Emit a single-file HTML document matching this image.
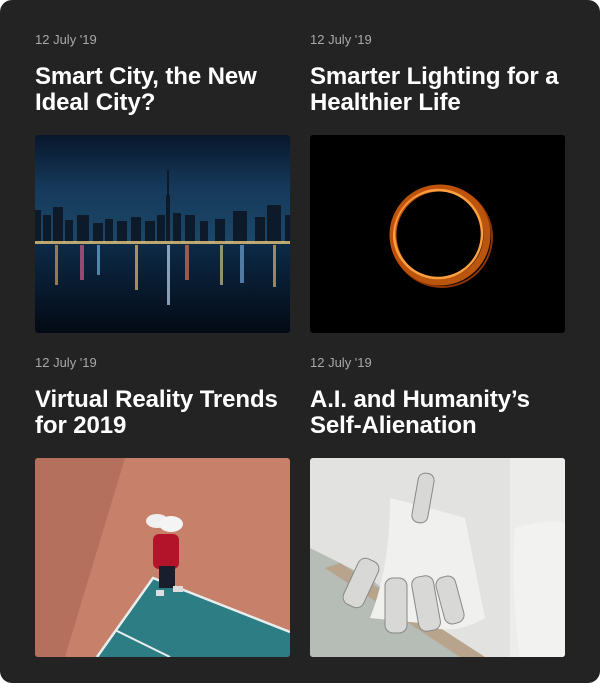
<!DOCTYPE html>
<html><head><meta charset="utf-8"><style>
html,body{margin:0;padding:0;background:#fff;width:600px;height:683px;overflow:hidden}
.wrap{position:absolute;left:0;top:0;width:600px;height:683px;background:#232323;border-radius:12px}
.card{position:absolute;width:255px}
.date{position:absolute;top:0;left:0;font:13px "Liberation Sans",sans-serif;color:#a8a8a8;white-space:nowrap}
.title{position:absolute;top:32px;left:0;font:bold 24px/26px "Liberation Sans",sans-serif;color:#fff;white-space:nowrap;letter-spacing:-0.1px}
.img{position:absolute;left:0;width:255px;border-radius:3px;overflow:hidden}
svg{display:block}
</style></head><body><div class="wrap">

<div class="card" style="left:35px;top:32px">
<div class="date">12 July '19</div>
<div class="title">Smart City, the New<br>Ideal City?</div>
<div class="img" style="top:103px;height:198px">
<svg width="255" height="198">
<defs><linearGradient id="sky" x1="0" y1="0" x2="0" y2="1"><stop offset="0" stop-color="#08172c"/><stop offset="0.5" stop-color="#163a5c"/><stop offset="1" stop-color="#1c4868"/></linearGradient>
<linearGradient id="wat" x1="0" y1="0" x2="0" y2="1"><stop offset="0" stop-color="#0d2a48"/><stop offset="1" stop-color="#030a14"/></linearGradient></defs>
<rect width="255" height="110" fill="url(#sky)"/>
<rect y="108" width="255" height="90" fill="url(#wat)"/>
<g fill="#0c1a2a">
<rect x="0" y="75" width="6" height="33"/><rect x="8" y="80" width="8" height="28"/><rect x="18" y="72" width="10" height="36"/><rect x="30" y="85" width="8" height="23"/><rect x="42" y="80" width="12" height="28"/><rect x="58" y="88" width="10" height="20"/><rect x="70" y="84" width="8" height="24"/><rect x="82" y="86" width="10" height="22"/><rect x="96" y="82" width="10" height="26"/><rect x="110" y="86" width="10" height="22"/><rect x="122" y="80" width="8" height="28"/><rect x="131" y="60" width="4" height="48"/><rect x="132" y="35" width="2" height="30"/><rect x="138" y="78" width="8" height="30"/><rect x="150" y="80" width="10" height="28"/><rect x="165" y="86" width="8" height="22"/><rect x="180" y="84" width="10" height="24"/><rect x="198" y="76" width="14" height="32"/><rect x="220" y="82" width="10" height="26"/><rect x="232" y="70" width="14" height="38"/><rect x="250" y="80" width="5" height="28"/>
</g>
<g fill="#e8c77a" opacity="0.8"><rect x="0" y="106" width="255" height="3"/></g>
<g opacity="0.7">
<rect x="20" y="110" width="3" height="40" fill="#c9a35a"/><rect x="45" y="110" width="4" height="35" fill="#d25a8a"/><rect x="62" y="110" width="3" height="30" fill="#6ab0e0"/><rect x="100" y="110" width="3" height="45" fill="#e0c070"/><rect x="132" y="110" width="3" height="60" fill="#c0d8f0"/><rect x="150" y="110" width="4" height="35" fill="#e07050"/><rect x="185" y="110" width="3" height="40" fill="#d0c080"/><rect x="205" y="110" width="4" height="38" fill="#70a0d0"/><rect x="238" y="110" width="3" height="42" fill="#e0b060"/>
</g>
</svg></div>
</div>

<div class="card" style="left:310px;top:32px">
<div class="date">12 July '19</div>
<div class="title">Smarter Lighting for a<br>Healthier Life</div>
<div class="img" style="top:103px;height:198px;background:#000">
<svg width="255" height="198">
<circle cx="130" cy="100" r="47" fill="none" stroke="#e86a10" stroke-width="7" opacity="0.8"/>
<circle cx="128" cy="99" r="44" fill="none" stroke="#ffa040" stroke-width="2.5"/>
<circle cx="132" cy="102" r="50" fill="none" stroke="#c84a08" stroke-width="2" opacity="0.7"/>
</svg></div>
</div>

<div class="card" style="left:35px;top:355px">
<div class="date">12 July '19</div>
<div class="title">Virtual Reality Trends<br>for 2019</div>
<div class="img" style="top:103px;height:199px;background:#c78069">
<svg width="255" height="199">
<polygon points="0,0 90,0 30,199 0,199" fill="#a86655" opacity="0.6"/>
<polygon points="118,120 255,174 255,199 62,199" fill="#2c7d84"/>
<polyline points="62,199 118,120 255,174" fill="none" stroke="#e8eeee" stroke-width="2.5"/>
<line x1="80" y1="172" x2="135" y2="199" stroke="#e8eeee" stroke-width="2"/>
<rect x="118" y="76" width="26" height="35" rx="6" fill="#b3142a"/>
<rect x="124" y="108" width="16" height="22" fill="#1a1e2c"/>
<ellipse cx="122" cy="63" rx="11" ry="7" fill="#f0f0f0"/>
<ellipse cx="136" cy="66" rx="12" ry="8" fill="#f4f4f4"/>
<rect x="121" y="132" width="8" height="6" fill="#ddd"/><rect x="138" y="128" width="10" height="6" fill="#ddd"/>
</svg></div>
</div>

<div class="card" style="left:310px;top:355px">
<div class="date">12 July '19</div>
<div class="title">A.I. and Humanity’s<br>Self-Alienation</div>
<div class="img" style="top:103px;height:199px;background:#e2e2e0">
<svg width="255" height="199">
<polygon points="0,90 0,199 150,199 60,120" fill="#b6bcb6"/>
<polygon points="15,110 150,199 175,199 30,105" fill="#b8a48c"/>
<rect x="200" y="0" width="55" height="199" fill="#ececea"/>
<path d="M205 70 Q240 60 255 65 L255 199 L210 199 Q200 130 205 70Z" fill="#f2f2f0"/>
<path d="M80 40 Q120 50 155 60 L175 160 Q140 180 110 165 L60 160 Q80 110 80 40Z" fill="#f0f0ee"/>
<g fill="#d8d8d6" stroke="#888" stroke-width="1">
<rect x="40" y="100" width="22" height="50" rx="8" transform="rotate(25 51 125)"/>
<rect x="75" y="120" width="22" height="55" rx="8"/>
<rect x="105" y="118" width="22" height="55" rx="8" transform="rotate(-10 116 145)"/>
<rect x="130" y="118" width="20" height="48" rx="8" transform="rotate(-15 140 142)"/>
<rect x="105" y="15" width="16" height="50" rx="7" transform="rotate(10 113 40)"/>
</g>
</svg></div>
</div>

</div></body></html>
